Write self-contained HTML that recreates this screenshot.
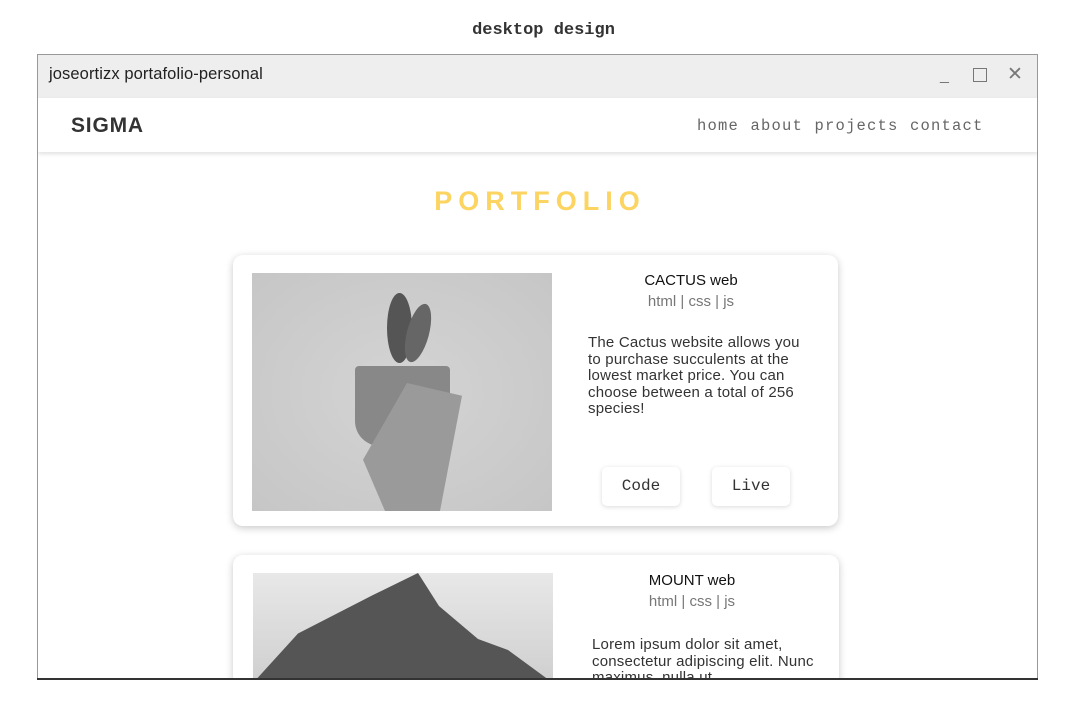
<!DOCTYPE html>
<html style="overflow:hidden;width:1075px;height:712px"><head><style>
*{margin:0;padding:0;box-sizing:border-box}
body{width:1075px;height:712px;background:#fff;position:relative;overflow:hidden;font-family:"Liberation Sans",sans-serif}
.abs{position:absolute}
.mono{font-family:"Liberation Mono",monospace}
.card{position:absolute;background:#fff;border-radius:10px;box-shadow:0 2px 8px rgba(0,0,0,.22)}
.btn{position:absolute;width:78px;height:39px;background:#fff;border-radius:5px;box-shadow:0 1px 5px rgba(0,0,0,.15);font-family:"Liberation Mono",monospace;font-size:16px;color:#333;text-align:center;line-height:39px}
.t{position:absolute;text-align:center;width:240px;font-size:15px;color:#111}
.s{position:absolute;text-align:center;width:240px;font-size:15px;color:#777}
.d{position:absolute;font-size:15px;color:#333;line-height:16.5px;width:222px;letter-spacing:0.2px}
</style></head><body>
<div class="abs mono" style="left:0;width:1087px;top:21px;text-align:center;font-size:17px;font-weight:bold;color:#333">desktop design</div>
<div class="abs" style="left:37px;top:54px;width:1001px;height:626px;border:1px solid #999;border-bottom:2px solid #333;overflow:hidden">
 <div class="abs" style="left:0;top:0;width:1000px;height:43px;background:#eee"></div>
 <div class="abs" style="left:11px;top:10px;font-size:16.5px;color:#222;letter-spacing:0.1px">joseortizx portafolio-personal</div>
 <div class="abs" style="left:902px;top:12px;font-size:16px;color:#777">_</div>
 <div class="abs" style="left:935px;top:13px;width:14px;height:14px;border:1.5px solid #777"></div>
 <div class="abs" style="left:969px;top:8px;font-size:19px;color:#777">✕</div>
 <div class="abs" style="left:0;top:43px;width:1000px;height:54px;background:#fff;box-shadow:0 2px 4px rgba(0,0,0,.12)"></div>
 <div class="abs" style="left:33px;top:59px;font-size:21px;font-weight:bold;color:#333;letter-spacing:0.8px">SIGMA</div>
 <div class="abs mono" style="left:659px;top:62px;font-size:15.5px;color:#666;word-spacing:1px;letter-spacing:1.2px">home about projects contact</div>
 <div class="abs" style="left:0;width:1000px;top:131px;text-align:center;font-size:27px;font-weight:bold;color:#fcd462;letter-spacing:6px;text-indent:4px">PORTFOLIO</div>
</div>
<div class="card" style="left:233px;top:255px;width:605px;height:271px"></div>
<div class="abs" style="left:252px;top:273px;width:300px;height:238px;background:radial-gradient(ellipse at 50% 50%,#d4d4d4,#c6c6c6);overflow:hidden">
 <div class="abs" style="left:135px;top:20px;width:25px;height:70px;border-radius:50%;background:#555"></div>
 <div class="abs" style="left:155px;top:30px;width:22px;height:60px;border-radius:50%;background:#666;transform:rotate(15deg)"></div>
 <div class="abs" style="left:103px;top:93px;width:95px;height:80px;background:#888;border-radius:4px 4px 25px 25px"></div>
 <div class="abs" style="left:100px;top:110px;width:110px;height:128px;background:#9a9a9a;clip-path:polygon(30% 100%,10% 60%,50% 0,100% 10%,80% 100%)"></div>
</div>
<div class="t" style="left:571px;top:272px">CACTUS web</div>
<div class="s" style="left:571px;top:293px">html | css | js</div>
<div class="d" style="left:588px;top:335px">The Cactus website allows you to purchase succulents at the lowest market price. You can choose between a total of 256 species!</div>
<div class="btn" style="left:602px;top:467px">Code</div>
<div class="btn" style="left:712px;top:467px">Live</div>
<div class="card" style="left:233px;top:555px;width:606px;height:140px"></div>
<div class="abs" style="left:253px;top:573px;width:300px;height:110px;background:linear-gradient(#e8e8e8,#cfcfcf);overflow:hidden">
 <div class="abs" style="left:0;top:0;width:300px;height:110px;background:#555;clip-path:polygon(0 100%,15% 55%,40% 20%,55% 0,62% 30%,75% 60%,85% 70%,100% 100%)"></div>
</div>
<div class="t" style="left:572px;top:572px">MOUNT web</div>
<div class="s" style="left:572px;top:593px">html | css | js</div>
<div class="d" style="left:592px;top:637px">Lorem ipsum dolor sit amet, consectetur adipiscing elit. Nunc maximus, nulla ut</div>
<div class="abs" style="left:0;top:678px;width:1075px;height:34px;background:#fff"></div>
<div class="abs" style="left:37px;top:678px;width:1001px;height:2px;background:#333"></div>
</body></html>
